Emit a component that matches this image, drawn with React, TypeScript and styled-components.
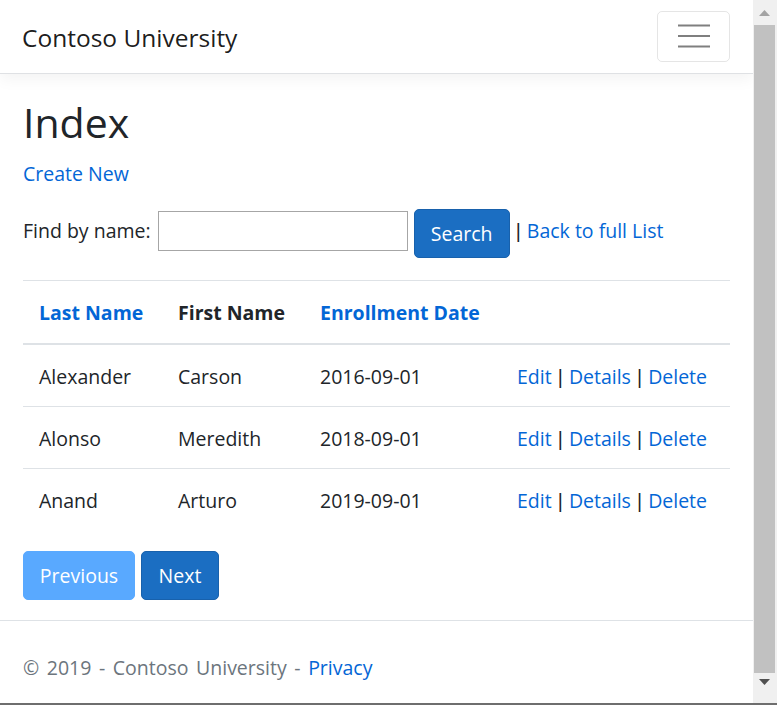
import React from "react";
import styled, { createGlobalStyle } from "styled-components";

const GlobalStyle = createGlobalStyle`
  html, body { margin: 0; padding: 0; background: #fff; overflow: hidden; }
  body {
    font-family: "Open Sans", "Noto Sans", sans-serif;
    font-size: 19.5px;
    color: #212529;
  }
  * { box-sizing: border-box; }
`;

const Frame = styled.div`
  width: 777px;
  height: 705px;
  display: flex;
  border-bottom: 2px solid #6e6e6e;
  overflow: hidden;
`;

const Page = styled.div`
  width: 753px;
  height: 703px;
  flex: none;
  overflow: hidden;
  display: flex;
  flex-direction: column;
  background: #fff;
`;

const Navbar = styled.header`
  height: 74px;
  flex: none;
  display: flex;
  align-items: center;
  justify-content: space-between;
  padding: 0 23px 1px;
  border-bottom: 1px solid #dfe1e4;
  box-shadow: 0 5px 15px rgba(0, 0, 0, 0.05);
  position: relative;
  z-index: 1;
  background: #fff;
`;

const Brand = styled.a`
  font-size: 24.5px;
  line-height: 36px;
  margin: 3px 0 0 -1px;
  color: rgba(0, 0, 0, 0.9);
  text-decoration: none;
`;

const Toggler = styled.button`
  width: 73px;
  height: 51px;
  border: 1px solid rgba(0, 0, 0, 0.1);
  border-radius: 5px;
  background: transparent;
  display: flex;
  align-items: center;
  justify-content: center;
  padding: 0;
`;

const Main = styled.main`
  flex: none;
  padding: 0 23px;
`;

const Title = styled.h1`
  margin: 24px 0 13px;
  font-size: 41px;
  font-weight: 500;
  line-height: 48px;
`;

const Link = styled.a`
  color: #0366d6;
  text-decoration: none;
`;

const Sep = styled.span`
  font-family: "Liberation Sans", Arial, sans-serif;
  line-height: 1;
  padding: 0 1px;
  color: #212529;
`;

const Para = styled.p`
  margin: 0;
  line-height: 30px;
`;

const SearchRow = styled.form`
  display: flex;
  align-items: flex-start;
  margin-top: 19.6px;
`;

const InlineText = styled.span<{ $ml?: number }>`
  line-height: 30px;
  margin-top: 7.7px;
  margin-left: ${(p) => p.$ml ?? 0}px;
  white-space: nowrap;
`;

const TextInput = styled.input`
  width: 250px;
  height: 40px;
  margin: 2px 0 0 7px;
  border: 1px solid #a6a6a6;
  border-radius: 0;
  padding: 0 8px;
  font: inherit;
`;

const Button = styled.button<{ $variant: "primary" | "disabled"; $w: number }>`
  width: ${(p) => p.$w}px;
  height: 49px;
  padding: 0;
  font: inherit;
  line-height: 47px;
  color: #fff;
  border-radius: 5px;
  background: ${(p) => (p.$variant === "primary" ? "#1b6ec2" : "#59a9ff")};
  border: 1px solid ${(p) => (p.$variant === "primary" ? "#1861ac" : "#59a9ff")};
`;

const SearchButton = styled(Button)`
  margin-left: 6px;
`;

const Table = styled.table`
  width: 100%;
  margin-top: 22px;
  border-collapse: collapse;
`;

const Th = styled.th<{ $w?: number }>`
  ${(p) => (p.$w ? `width: ${p.$w}px;` : "")}
  text-align: left;
  font-weight: 700;
  padding: 16px 16px 15px;
  line-height: 31px;
  border-top: 1px solid #dee2e6;
  border-bottom: 2px solid #dee2e6;
  vertical-align: top;
  white-space: nowrap;
`;

const Td = styled.td`
  padding: 16px 16px 14px;
  line-height: 31px;
  border-top: 1px solid #dee2e6;
  vertical-align: top;
  white-space: nowrap;
`;

const Pager = styled.div`
  display: flex;
  gap: 6px;
  margin-top: 21px;
`;

const Footer = styled.footer`
  flex: none;
  margin-top: 20px;
  border-top: 1px solid #dee2e6;
  padding: 32px 23px 0;
  line-height: 30px;
  color: #6c757d;
  white-space: nowrap;
  word-spacing: 2.5px;
`;

const Scrollbar = styled.div`
  width: 24px;
  height: 703px;
  flex: none;
  display: flex;
  flex-direction: column;
  background: #f0f0f0;
`;

const ScrollArrow = styled.div<{ $h: number; $align: "center" | "flex-start" }>`
  height: ${(p) => p.$h}px;
  flex: none;
  display: flex;
  justify-content: center;
  align-items: ${(p) => p.$align};
  padding: ${(p) => (p.$align === "flex-start" ? "6px" : "0")} 2px 0 0;
`;

const Thumb = styled.div`
  flex: 1;
  margin: 0 2px 0 1px;
  background: #c1c1c1;
`;

const students = [
  { last: "Alexander", first: "Carson", date: "2016-09-01" },
  { last: "Alonso", first: "Meredith", date: "2018-09-01" },
  { last: "Anand", first: "Arturo", date: "2019-09-01" },
];

export default function App() {
  return (
    <>
      <GlobalStyle />
      <Frame>
        <Page>
          <Navbar>
            <Brand href="#">Contoso University</Brand>
            <Toggler aria-label="Toggle navigation">
              <svg width="32" height="24" viewBox="0 0 32 24">
                <path
                  d="M0 1.5h32M0 12h32M0 22.5h32"
                  stroke="rgba(0,0,0,0.5)"
                  strokeWidth="2.2"
                />
              </svg>
            </Toggler>
          </Navbar>
          <Main>
            <Title>Index</Title>
            <Para>
              <Link href="#">Create New</Link>
            </Para>
            <SearchRow onSubmit={(e) => e.preventDefault()}>
              <InlineText>Find by name:</InlineText>
              <TextInput type="text" />
              <SearchButton type="submit" $variant="primary" $w={96}>
                Search
              </SearchButton>
              <InlineText $ml={5}>
                <Sep>|</Sep> <Link href="#">Back to full List</Link>
              </InlineText>
            </SearchRow>
            <Table>
              <thead>
                <tr>
                  <Th $w={139}>
                    <Link href="#">Last Name</Link>
                  </Th>
                  <Th $w={142}>First Name</Th>
                  <Th $w={197}>
                    <Link href="#">Enrollment Date</Link>
                  </Th>
                  <Th />
                </tr>
              </thead>
              <tbody>
                {students.map((s) => (
                  <tr key={s.last}>
                    <Td>{s.last}</Td>
                    <Td>{s.first}</Td>
                    <Td>{s.date}</Td>
                    <Td>
                      <Link href="#">Edit</Link> <Sep>|</Sep> <Link href="#">Details</Link>{" "}
                      <Sep>|</Sep> <Link href="#">Delete</Link>
                    </Td>
                  </tr>
                ))}
              </tbody>
            </Table>
            <Pager>
              <Button $variant="disabled" $w={112}>
                Previous
              </Button>
              <Button $variant="primary" $w={78}>
                Next
              </Button>
            </Pager>
          </Main>
          <Footer>
            © 2019 - Contoso University - <Link href="#">Privacy</Link>
          </Footer>
        </Page>
        <Scrollbar>
          <ScrollArrow $h={25} $align="center">
            <svg width="11" height="6" viewBox="0 0 11 6">
              <path d="M5.5 0L11 6H0z" fill="#a3a3a3" />
            </svg>
          </ScrollArrow>
          <Thumb />
          <ScrollArrow $h={30} $align="flex-start">
            <svg width="11" height="6" viewBox="0 0 11 6">
              <path d="M0 0h11L5.5 6z" fill="#505050" />
            </svg>
          </ScrollArrow>
        </Scrollbar>
      </Frame>
    </>
  );
}
